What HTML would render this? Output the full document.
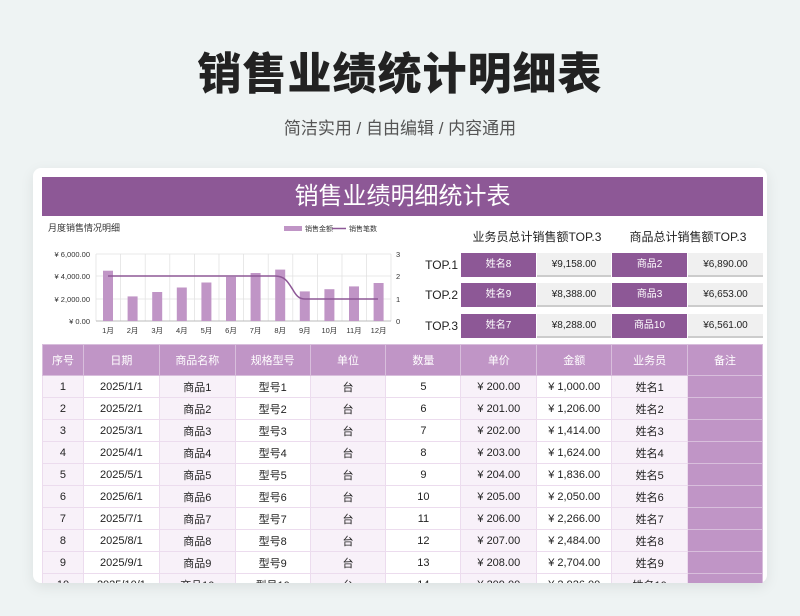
<!DOCTYPE html>
<html><head><meta charset="utf-8">
<style>
*{margin:0;padding:0;box-sizing:border-box}
body{width:800px;height:616px;background:#eef3f3;font-family:"Liberation Sans","Noto Sans CJK SC",sans-serif;position:relative;overflow:hidden}
.a{position:absolute}
h1{position:absolute;top:38px;left:0;width:800px;text-align:center;font-size:44px;font-weight:900;color:#222;letter-spacing:1px}
.sub{top:114px;left:0;width:800px;text-align:center;font-size:17px;color:#555}
.card{left:33px;top:168px;width:734px;height:415px;background:#fff;border-radius:8px;box-shadow:0 4px 14px rgba(0,0,0,0.08);overflow:hidden}
.bar{left:42px;top:177px;width:721px;height:39px;background:#8d5896;color:#fff;font-size:24px;text-align:center;line-height:39px}
.tl{font-size:12px;color:#222;width:34px;text-align:right;left:424px}
.bx{height:24px;font-size:10px;line-height:24px;text-align:center}
.p{background:#8d5896;color:#fff}
.g{background:#f0f0f0;color:#222;border-bottom:2px solid #ccc}
table{position:absolute;left:42px;top:344px;border-collapse:collapse;table-layout:fixed}
td,th{font-size:11px;text-align:center;height:22px;border:1px solid #ecdcee;color:#222;font-weight:normal;padding:0}
th{background:#c095c6;color:#fff;height:31px;border-color:#d8bedc}
td.l{background:#f8f1f9}
td.r{background:#c095c6;border-color:#d8bedc}
</style></head><body>
<h1>销售业绩统计明细表</h1>
<div class="a sub">简洁实用 / 自由编辑 / 内容通用</div>
<div class="a card"></div>
<div class="a bar">销售业绩明细统计表</div>
<svg class="a" style="left:42px;top:218px" width="370" height="124" viewBox="42 218 370 124">
<text x="48" y="231" font-size="9" fill="#333">月度销售情况明细</text>
<rect x="284" y="226" width="18" height="5" fill="#c095c6"/><text x="305" y="231" font-size="7" fill="#333">销售金额</text>
<line x1="332" y1="228.5" x2="346" y2="228.5" stroke="#8d5896" stroke-width="1.5"/><text x="349" y="231" font-size="7" fill="#333">销售笔数</text>
<g stroke="#e2e2e2" stroke-width="0.8">
<line x1="96" y1="254" x2="391" y2="254"/><line x1="96" y1="276" x2="391" y2="276"/><line x1="96" y1="299" x2="391" y2="299"/>
<line x1="96" y1="254" x2="96" y2="321"/><line x1="120.6" y1="254" x2="120.6" y2="321"/><line x1="145.2" y1="254" x2="145.2" y2="321"/><line x1="169.8" y1="254" x2="169.8" y2="321"/><line x1="194.4" y1="254" x2="194.4" y2="321"/><line x1="219" y1="254" x2="219" y2="321"/><line x1="243.6" y1="254" x2="243.6" y2="321"/><line x1="268.2" y1="254" x2="268.2" y2="321"/><line x1="292.8" y1="254" x2="292.8" y2="321"/><line x1="317.4" y1="254" x2="317.4" y2="321"/><line x1="342" y1="254" x2="342" y2="321"/><line x1="366.6" y1="254" x2="366.6" y2="321"/><line x1="391" y1="254" x2="391" y2="321"/>
</g>
<line x1="96" y1="321" x2="391" y2="321" stroke="#bbb"/>
<g fill="#c095c6">
<rect x="103" y="270.7" width="10" height="50.3"/><rect x="127.6" y="296.4" width="10" height="24.6"/><rect x="152.2" y="292" width="10" height="29"/><rect x="176.8" y="287.5" width="10" height="33.5"/><rect x="201.4" y="282.5" width="10" height="38.5"/><rect x="226" y="276.9" width="10" height="44.1"/><rect x="250.6" y="273" width="10" height="48"/><rect x="275.2" y="269.6" width="10" height="51.4"/><rect x="299.8" y="291.4" width="10" height="29.6"/><rect x="324.4" y="289.2" width="10" height="31.8"/><rect x="349" y="286.4" width="10" height="34.6"/><rect x="373.6" y="283" width="10" height="38"/>
</g>
<path d="M108 276 L275 276 C285 276 288 282 293 290 C297 297 300 299 305 299 L378 299" fill="none" stroke="#8d5896" stroke-width="1.5"/>
<g font-size="7.5" fill="#333" text-anchor="end">
<text x="90" y="257">¥ 6,000.00</text><text x="90" y="279">¥ 4,000.00</text><text x="90" y="302">¥ 2,000.00</text><text x="90" y="324">¥ 0.00</text>
</g>
<g font-size="7.5" fill="#333"><text x="396" y="257">3</text><text x="396" y="279">2</text><text x="396" y="302">1</text><text x="396" y="324">0</text></g>
<g font-size="7.5" fill="#333" text-anchor="middle">
<text x="108" y="333">1月</text><text x="132.6" y="333">2月</text><text x="157.2" y="333">3月</text><text x="181.8" y="333">4月</text><text x="206.4" y="333">5月</text><text x="231" y="333">6月</text><text x="255.6" y="333">7月</text><text x="280.2" y="333">8月</text><text x="304.8" y="333">9月</text><text x="329.4" y="333">10月</text><text x="354" y="333">11月</text><text x="378.6" y="333">12月</text>
</g>
</svg>
<div class="a" style="left:462px;top:228px;width:150px;text-align:center;font-size:12px;color:#222">业务员总计销售额TOP.3</div>
<div class="a" style="left:613px;top:228px;width:150px;text-align:center;font-size:12px;color:#222">商品总计销售额TOP.3</div>
<div class="a tl" style="top:258px">TOP.1</div>
<div class="a tl" style="top:288px">TOP.2</div>
<div class="a tl" style="top:319px">TOP.3</div>
<div class="a bx p" style="left:461px;top:253px;width:75px">姓名8</div><div class="a bx g" style="left:537px;top:253px;width:74px">¥9,158.00</div><div class="a bx p" style="left:612px;top:253px;width:75px">商品2</div><div class="a bx g" style="left:688px;top:253px;width:75px">¥6,890.00</div>
<div class="a bx p" style="left:461px;top:283px;width:75px">姓名9</div><div class="a bx g" style="left:537px;top:283px;width:74px">¥8,388.00</div><div class="a bx p" style="left:612px;top:283px;width:75px">商品3</div><div class="a bx g" style="left:688px;top:283px;width:75px">¥6,653.00</div>
<div class="a bx p" style="left:461px;top:314px;width:75px">姓名7</div><div class="a bx g" style="left:537px;top:314px;width:74px">¥8,288.00</div><div class="a bx p" style="left:612px;top:314px;width:75px">商品10</div><div class="a bx g" style="left:688px;top:314px;width:75px">¥6,561.00</div>
<div class="a" style="left:42px;top:344px;width:721px;height:239px;overflow:hidden">
<table style="left:0;top:0">
<colgroup><col style="width:41px"><col style="width:76px"><col style="width:76px"><col style="width:75px"><col style="width:76px"><col style="width:75px"><col style="width:76px"><col style="width:75px"><col style="width:76px"><col style="width:75px"></colgroup>
<tr><th>序号</th><th>日期</th><th>商品名称</th><th>规格型号</th><th>单位</th><th>数量</th><th>单价</th><th>金额</th><th>业务员</th><th>备注</th></tr>
<tr><td class="l">1</td><td>2025/1/1</td><td class="l">商品1</td><td>型号1</td><td class="l">台</td><td>5</td><td class="l">¥ 200.00</td><td>¥ 1,000.00</td><td class="l">姓名1</td><td class="r"></td></tr>
<tr><td class="l">2</td><td>2025/2/1</td><td class="l">商品2</td><td>型号2</td><td class="l">台</td><td>6</td><td class="l">¥ 201.00</td><td>¥ 1,206.00</td><td class="l">姓名2</td><td class="r"></td></tr>
<tr><td class="l">3</td><td>2025/3/1</td><td class="l">商品3</td><td>型号3</td><td class="l">台</td><td>7</td><td class="l">¥ 202.00</td><td>¥ 1,414.00</td><td class="l">姓名3</td><td class="r"></td></tr>
<tr><td class="l">4</td><td>2025/4/1</td><td class="l">商品4</td><td>型号4</td><td class="l">台</td><td>8</td><td class="l">¥ 203.00</td><td>¥ 1,624.00</td><td class="l">姓名4</td><td class="r"></td></tr>
<tr><td class="l">5</td><td>2025/5/1</td><td class="l">商品5</td><td>型号5</td><td class="l">台</td><td>9</td><td class="l">¥ 204.00</td><td>¥ 1,836.00</td><td class="l">姓名5</td><td class="r"></td></tr>
<tr><td class="l">6</td><td>2025/6/1</td><td class="l">商品6</td><td>型号6</td><td class="l">台</td><td>10</td><td class="l">¥ 205.00</td><td>¥ 2,050.00</td><td class="l">姓名6</td><td class="r"></td></tr>
<tr><td class="l">7</td><td>2025/7/1</td><td class="l">商品7</td><td>型号7</td><td class="l">台</td><td>11</td><td class="l">¥ 206.00</td><td>¥ 2,266.00</td><td class="l">姓名7</td><td class="r"></td></tr>
<tr><td class="l">8</td><td>2025/8/1</td><td class="l">商品8</td><td>型号8</td><td class="l">台</td><td>12</td><td class="l">¥ 207.00</td><td>¥ 2,484.00</td><td class="l">姓名8</td><td class="r"></td></tr>
<tr><td class="l">9</td><td>2025/9/1</td><td class="l">商品9</td><td>型号9</td><td class="l">台</td><td>13</td><td class="l">¥ 208.00</td><td>¥ 2,704.00</td><td class="l">姓名9</td><td class="r"></td></tr>
<tr><td class="l">10</td><td>2025/10/1</td><td class="l">商品10</td><td>型号10</td><td class="l">台</td><td>14</td><td class="l">¥ 209.00</td><td>¥ 2,926.00</td><td class="l">姓名10</td><td class="r"></td></tr>
</table></div>
</body></html>
